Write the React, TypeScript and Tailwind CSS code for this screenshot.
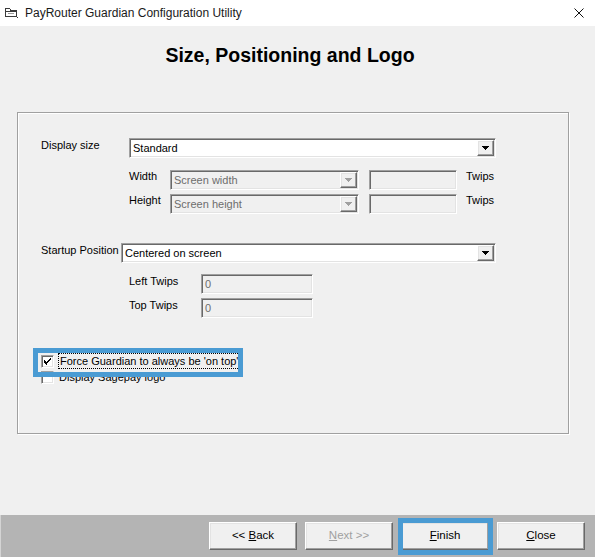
import React from "react";

const sunken =
  "border border-t-[#a0a0a0] border-l-[#a0a0a0] border-b-white border-r-white shadow-[inset_1px_1px_0_#696969,inset_-1px_-1px_0_#e3e3e3]";
const raised =
  "border border-t-white border-l-white border-b-[#696969] border-r-[#696969] shadow-[inset_-1px_-1px_0_#a0a0a0,inset_1px_1px_0_#e3e3e3] bg-[#f0f0f0]";

function Arrow({ disabled }: { disabled?: boolean }) {
  return (
    <svg width="7" height="4" viewBox="0 0 7 4" shapeRendering="crispEdges">
      <path
        d="M0 0h7v1H0z M1 1h5v1H1z M2 2h3v1H2z M3 3h1v1H3z"
        fill={disabled ? "#a0a0a0" : "#000"}
      />
    </svg>
  );
}

function Combo({ text, disabled, w }: { text: string; disabled?: boolean; w: string }) {
  return (
    <div
      className={`flex h-[20px] items-center ${w} ${sunken} ${
        disabled ? "bg-[#f0f0f0] text-[#6d6d6d]" : "bg-white text-black"
      }`}
    >
      <span className="flex-1 truncate pl-[3px] text-[11px] leading-[13px]">{text}</span>
      <div className={`mr-[1px] flex h-[16px] w-[17px] items-center justify-center ${raised}`}>
        <Arrow disabled={disabled} />
      </div>
    </div>
  );
}

function TextBox({ text, w }: { text?: string; w: string }) {
  return (
    <div className={`flex h-[20px] items-center bg-[#f0f0f0] text-[#6d6d6d] ${w} ${sunken}`}>
      <span className="pl-[3px] text-[11px] leading-[13px]">{text}</span>
    </div>
  );
}

function CheckBox({ checked }: { checked?: boolean }) {
  return (
    <div
      className={`flex h-[13px] w-[13px] shrink-0 items-center justify-center bg-white ${sunken}`}
    >
      {checked && (
        <svg width="7" height="7" viewBox="0 0 7 7" shapeRendering="crispEdges">
          <path
            d="M6 0h1v1H6z M5 1h1v2H5z M4 2h1v2H4z M3 3h1v2H3z M2 4h1v3H2z M1 3h1v3H1z M0 2h1v3H0z M6 1h1v1H6z"
            fill="#000"
          />
        </svg>
      )}
    </div>
  );
}

function Button({
  children,
  disabled,
}: {
  children: React.ReactNode;
  disabled?: boolean;
}) {
  return (
    <div
      className={`flex h-[28px] w-[88px] items-center justify-center text-[11.5px] ${raised} ${
        disabled ? "text-[#a0a0a0]" : "text-black"
      }`}
    >
      <span className="whitespace-pre">{children}</span>
    </div>
  );
}

export default function App() {
  return (
    <div className="flex h-[557px] w-[595px] flex-col overflow-hidden bg-[#f0f0f0] font-['Liberation_Sans',Arial,sans-serif] text-black">
      {/* Title bar */}
      <div className="flex h-[26px] shrink-0 items-center bg-white pl-[5px]">
        <svg width="13" height="12" viewBox="0 0 13 12" shapeRendering="crispEdges">
          <path d="M0.5 1.5h4l1 1.5h5.5v6.5h-10.5z" fill="none" stroke="#3a3a3a" />
          <path d="M0.5 4.5h10.5" stroke="#3a3a3a" />
          <path d="M2.5 6.5h6" stroke="#9a9a9a" />
          <rect x="12" y="10" width="1" height="1" fill="#3a3a3a" />
        </svg>
        <span className="ml-[7px] text-[12px] leading-[16px] text-[#1a1a1a]">
          PayRouter Guardian Configuration Utility
        </span>
        <div className="ml-auto mr-[11px] flex h-[10px] w-[10px] items-center justify-center">
          <svg width="10" height="10" viewBox="0 0 10 10">
            <path d="M0.5 0.5L9.5 9.5M9.5 0.5L0.5 9.5" stroke="#111" strokeWidth="1" />
          </svg>
        </div>
      </div>

      {/* Body */}
      <div className="flex flex-1 flex-col">
        <div className="mt-[18px] pr-[15px] text-center text-[19.5px] font-bold leading-[22px]">
          Size, Positioning and Logo
        </div>

        <div className="ml-[17px] mt-[46px] h-[322px] w-[552px] border border-[#a0a0a0] pt-[25px] shadow-[1px_1px_0_#ffffff,inset_1px_1px_0_#ffffff] text-[11px] leading-[13px]">
          {/* Display size */}
          <div className="flex h-[20px] items-start pl-[23px]">
            <span className="mt-[1px] w-[88px]">Display size</span>
            <Combo text="Standard" w="w-[367px]" />
          </div>
          {/* Width */}
          <div className="mt-[12px] flex h-[20px] items-start pl-[111px]">
            <span className="w-[41px]">Width</span>
            <Combo text="Screen width" disabled w="w-[189px]" />
            <div className="ml-[10px]">
              <TextBox w="w-[88px]" />
            </div>
            <span className="ml-[9px]">Twips</span>
          </div>
          {/* Height */}
          <div className="mt-[4px] flex h-[20px] items-start pl-[111px]">
            <span className="w-[41px]">Height</span>
            <Combo text="Screen height" disabled w="w-[189px]" />
            <div className="ml-[10px]">
              <TextBox w="w-[88px]" />
            </div>
            <span className="ml-[9px]">Twips</span>
          </div>
          {/* Startup position */}
          <div className="mt-[29px] flex h-[20px] items-start pl-[23px]">
            <span className="mt-[1px] w-[80px]">Startup Position</span>
            <Combo text="Centered on screen" w="w-[375px]" />
          </div>
          {/* Left twips */}
          <div className="mt-[11px] flex h-[20px] items-start pl-[111px]">
            <span className="mt-[1px] w-[72px]">Left Twips</span>
            <TextBox text="0" w="w-[112px]" />
          </div>
          {/* Top twips */}
          <div className="mt-[4px] flex h-[20px] items-start pl-[111px]">
            <span className="mt-[1px] w-[72px]">Top Twips</span>
            <TextBox text="0" w="w-[112px]" />
          </div>

          {/* Checkboxes */}
          <div className="relative mt-[35px]">
            <div className="flex h-[16px] items-center pl-[23px]">
              <CheckBox checked />
              <span className="ml-[4px] flex h-[16px] items-center border border-dotted border-black px-[1px]">
                Force Guardian to always be 'on top'
              </span>
            </div>
            <div className="flex h-[16px] items-center pl-[23px]">
              <CheckBox />
              <span className="ml-[4px] px-[1px]">Display Sagepay logo</span>
            </div>
            <div className="pointer-events-none absolute left-[15px] top-[-5px] h-[29px] w-[210px] border-[5px] border-[#4a9bd3]" />
          </div>
        </div>
      </div>

      {/* Footer */}
      <div className="flex h-[42px] shrink-0 justify-end gap-[8px] border-l border-[#d4d4d4] bg-[#b4b4b4] pr-[10px] pt-[7px]">
        <Button>
          {"<< "}
          <span className="underline">B</span>ack
        </Button>
        <Button disabled>
          <span className="underline">N</span>
          {"ext >>"}
        </Button>
        <div className="relative">
          <Button>
            <span className="underline">F</span>inish
          </Button>
          <div className="pointer-events-none absolute left-[-3px] top-[-4px] h-[37px] w-[95px] border-[5px] border-[#4a9bd3]" />
        </div>
        <Button>
          <span className="underline">C</span>lose
        </Button>
      </div>
    </div>
  );
}
